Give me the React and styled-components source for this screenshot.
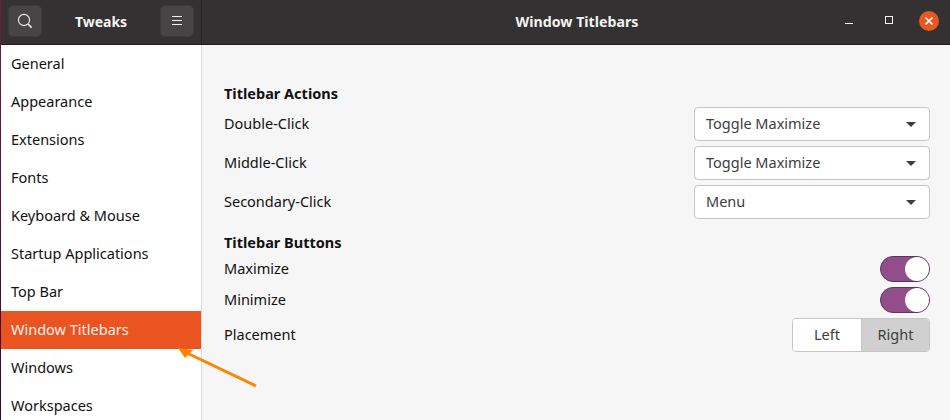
import React from "react";
import styled, { createGlobalStyle } from "styled-components";

const GlobalStyle = createGlobalStyle`
  html, body {
    margin: 0;
    padding: 0;
    background: #f6f6f6;
  }
  * {
    box-sizing: border-box;
  }
`;

const menuItems = [
  "General",
  "Appearance",
  "Extensions",
  "Fonts",
  "Keyboard & Mouse",
  "Startup Applications",
  "Top Bar",
  "Window Titlebars",
  "Windows",
  "Workspaces",
];

function SearchIcon() {
  return (
    <svg width="16" height="16" viewBox="0 0 16 16" fill="none" stroke="#f2f1ef" strokeWidth="1.1">
      <circle cx="7" cy="7" r="5.6" />
      <path d="M11 11l3.6 3.6" strokeWidth="1.5" />
    </svg>
  );
}

function MenuIcon() {
  return (
    <svg width="12" height="12" viewBox="0 0 12 12" fill="none" stroke="#f2f1ef" strokeWidth="1">
      <path d="M1 1.5h10M1 5.5h10M1 9.5h10" />
    </svg>
  );
}

function CaretIcon() {
  return (
    <svg width="10" height="5" viewBox="0 0 10 5" fill="#3d3d3d">
      <path d="M0 0h10L5 5z" />
    </svg>
  );
}

function App() {
  return (
    <Page>
      <GlobalStyle />
      <Header>
        <SideHeader>
          <HeaderButton aria-label="Search">
            <SearchIcon />
          </HeaderButton>
          <AppTitle>Tweaks</AppTitle>
          <HeaderButton aria-label="Menu">
            <MenuIcon />
          </HeaderButton>
        </SideHeader>
        <MainHeader>
          <WindowTitle>Window Titlebars</WindowTitle>
          <WindowControls>
            <Minimize />
            <Maximize />
            <CloseButton>
              <svg width="10" height="10" viewBox="0 0 10 10" stroke="#fff" strokeWidth="1.6">
                <path d="M1.5 1.5l7 7M8.5 1.5l-7 7" />
              </svg>
            </CloseButton>
          </WindowControls>
        </MainHeader>
      </Header>
      <Body>
        <Sidebar>
          {menuItems.map((item) => (
            <MenuItem key={item} $active={item === "Window Titlebars"}>
              {item}
            </MenuItem>
          ))}
        </Sidebar>
        <Content>
          <Heading>Titlebar Actions</Heading>
          <Rows>
            <Row>
              <Label>Double-Click</Label>
              <Select>
                Toggle Maximize
                <CaretIcon />
              </Select>
            </Row>
            <Row>
              <Label>Middle-Click</Label>
              <Select>
                Toggle Maximize
                <CaretIcon />
              </Select>
            </Row>
            <Row>
              <Label>Secondary-Click</Label>
              <Select>
                Menu
                <CaretIcon />
              </Select>
            </Row>
          </Rows>
          <Heading $second>Titlebar Buttons</Heading>
          <Rows>
            <Row>
              <Label>Maximize</Label>
              <Switch>
                <Knob />
              </Switch>
            </Row>
            <Row>
              <Label>Minimize</Label>
              <Switch>
                <Knob />
              </Switch>
            </Row>
            <Row>
              <Label>Placement</Label>
              <Segmented>
                <Segment>Left</Segment>
                <Segment $active>Right</Segment>
              </Segmented>
            </Row>
          </Rows>
        </Content>
      </Body>
      <Arrow width="100" height="60" viewBox="0 0 100 60">
        <path d="M89 47L20 14" stroke="#ff8500" strokeWidth="3" fill="none" />
        <path d="M11 9L26 11L18 19z" fill="#ff8500" />
      </Arrow>
    </Page>
  );
}

const Page = styled.div`
  position: relative;
  width: 950px;
  height: 420px;
  overflow: hidden;
  font-family: "Noto Sans", "Open Sans", sans-serif;
  font-size: 14.5px;
  color: #111;
  background: #f6f6f6;
  border-left: 1px solid;
  border-image: linear-gradient(#7a1a3e, #2c0a3a) 1;
`;

const Header = styled.div`
  display: flex;
  height: 45px;
  background: #333131;
  border-bottom: 1px solid #1e1d1d;
  color: #f5f4f2;
`;

const SideHeader = styled.div`
  display: flex;
  align-items: center;
  justify-content: space-between;
  width: 201px;
  padding: 0 7px 2px;
  border-right: 1px solid #272626;
`;

const HeaderButton = styled.button`
  display: flex;
  align-items: center;
  justify-content: center;
  width: 34px;
  height: 32px;
  padding: 0;
  background: #464444;
  border: 1px solid #3c3a3a;
  border-radius: 5px;
`;

const AppTitle = styled.div`
  font-weight: 700;
  font-size: 14px;
`;

const MainHeader = styled.div`
  position: relative;
  flex: 1;
  display: flex;
  align-items: center;
  justify-content: center;
  padding: 0 0 2px 2px;
`;

const WindowTitle = styled.div`
  font-weight: 700;
  font-size: 14.2px;
`;

const WindowControls = styled.div`
  position: absolute;
  top: 11px;
  right: 11px;
  display: flex;
  align-items: center;
`;

const Minimize = styled.div`
  width: 8px;
  height: 1px;
  margin-top: 5px;
  margin-right: 32px;
  background: #f5f4f2;
`;

const Maximize = styled.div`
  width: 8px;
  height: 8px;
  margin-top: -3px;
  margin-right: 26px;
  border: 1px solid #f5f4f2;
`;

const CloseButton = styled.div`
  display: flex;
  align-items: center;
  justify-content: center;
  width: 20px;
  height: 20px;
  border-radius: 50%;
  background: #ea5721;
`;

const Body = styled.div`
  display: flex;
  height: 375px;
`;

const Sidebar = styled.div`
  width: 201px;
  flex-shrink: 0;
  background: #fff;
  border-right: 1px solid #dcdbd9;
`;

const MenuItem = styled.div`
  display: flex;
  align-items: center;
  height: 38px;
  padding: 0 0 2px 10px;
  background: ${(p) => (p.$active ? "#e95420" : "transparent")};
  color: ${(p) => (p.$active ? "#fdf0ea" : "#111")};
`;

const Content = styled.div`
  flex: 1;
  padding: 40px 20px 0 22px;
`;

const Heading = styled.div`
  height: 18px;
  margin-top: ${(p) => (p.$second ? "15px" : "0")};
  margin-bottom: 4px;
  line-height: 16px;
  font-weight: 700;
`;

const Rows = styled.div`
  display: flex;
  flex-direction: column;
  gap: 5px;
`;

const Row = styled.div`
  display: flex;
  align-items: center;
  justify-content: space-between;
`;

const Label = styled.div`
  padding-bottom: 2px;
  color: #111;
`;

const Select = styled.div`
  display: flex;
  align-items: center;
  justify-content: space-between;
  width: 236px;
  height: 34px;
  padding: 0 13px 2px 11px;
  background: #fff;
  border: 1px solid #c6c5c3;
  border-radius: 4px;
  color: #3d3d3d;

  svg {
    margin-top: 2px;
  }
`;

const Switch = styled.div`
  display: flex;
  justify-content: flex-end;
  width: 50px;
  height: 26px;
  background: #924d8b;
  border: 1px solid #5e3359;
  border-radius: 13px;
`;

const Knob = styled.div`
  width: 24px;
  height: 24px;
  background: #fff;
  border-radius: 50%;
`;

const Segmented = styled.div`
  display: flex;
  width: 138px;
  height: 34px;
  border: 1px solid #c6c5c3;
  border-radius: 4px;
  overflow: hidden;
`;

const Segment = styled.div`
  display: flex;
  align-items: center;
  justify-content: center;
  width: 68px;
  padding-bottom: 2px;
  background: ${(p) => (p.$active ? "#d0d0d0" : "#fff")};
  border-left: ${(p) => (p.$active ? "1px solid #c6c5c3" : "none")};
  color: #3d3d3d;
`;

const Arrow = styled.svg`
  position: absolute;
  left: 166px;
  top: 339px;
`;

export default App;
